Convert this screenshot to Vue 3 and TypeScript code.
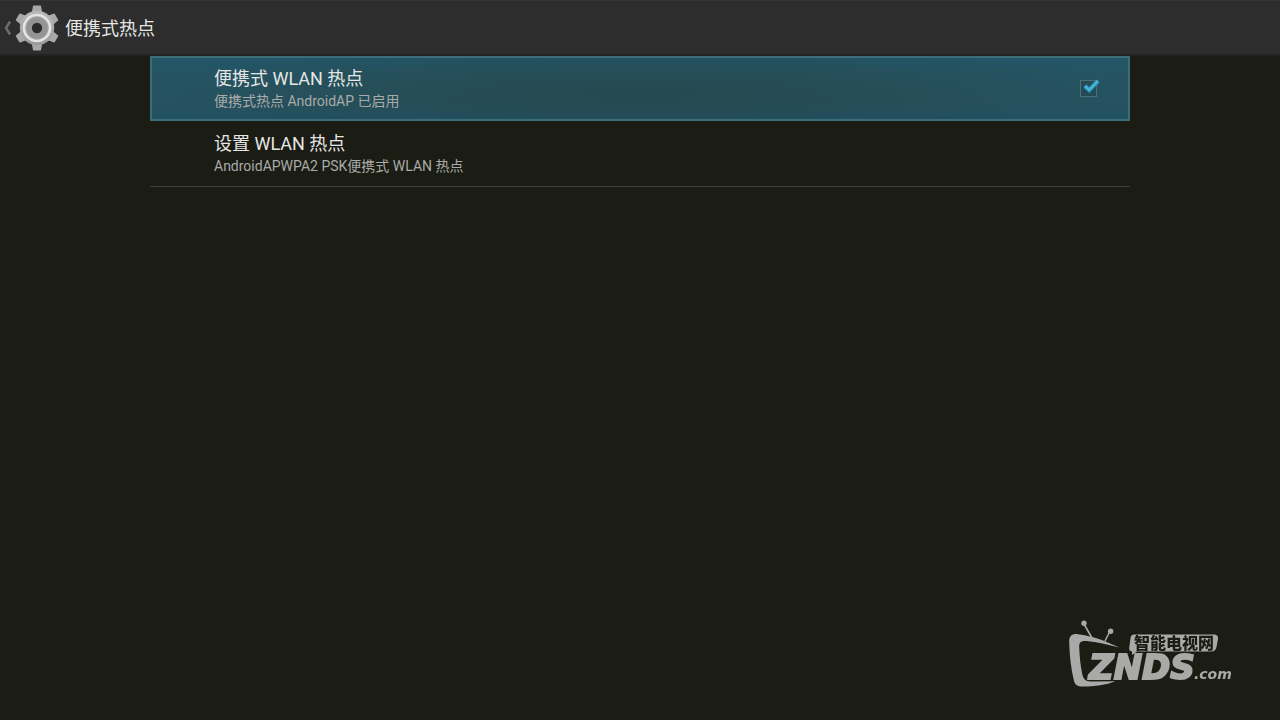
<script setup lang="ts">
import { ref } from 'vue'

const hotspotEnabled = ref<boolean>(true)
const toothAngles: number[] = [0, 60, 120, 180, 240, 300]
</script>

<template>
  <div class="screen">
    <header class="action-bar">
      <button class="up" type="button" aria-label="返回">
        <svg class="chevron" width="8" height="18" viewBox="0 0 8 18" aria-hidden="true">
          <path d="M6 2.500 L2 9 L6 15.500" fill="none" stroke="#6e6e6e" stroke-width="2.400" />
        </svg>
        <svg class="gear" width="48" height="48" viewBox="-24 -24 48 48" aria-hidden="true">
          <defs>
            <linearGradient id="metal" gradientUnits="userSpaceOnUse" x1="0" y1="-22" x2="0" y2="22">
              <stop offset="0" stop-color="#bdbdbd" />
              <stop offset="1" stop-color="#969696" />
            </linearGradient>
          </defs>
          <g fill="#a9a9a9">
            <path
              v-for="angle in toothAngles"
              :key="angle"
              d="M-5.5 -14 L-4 -22 Q-3.9 -22.4 -3.5 -22.4 H3.5 Q3.9 -22.4 4 -22 L5.5 -14 Z"
              :transform="`rotate(${angle})`"
            />
          </g>
          <circle r="17.2" fill="url(#metal)" />
          <circle r="13" fill="#a2a2a2" stroke="#e4e4e4" stroke-width="2.6" />
          <circle r="8" fill="none" stroke="#949494" stroke-width="5" />
          <circle r="5.2" fill="#2b2b2b" />
        </svg>
      </button>
      <h1 class="title">便携式热点</h1>
    </header>

    <main class="list">
      <label class="row selected">
        <span class="texts">
          <span class="name">便携式 WLAN 热点</span>
          <span class="summary">便携式热点 AndroidAP 已启用</span>
        </span>
        <span class="check">
          <input v-model="hotspotEnabled" type="checkbox" />
          <svg v-if="hotspotEnabled" class="tick" width="22" height="20" viewBox="0 0 22 20" aria-hidden="true">
            <path d="M5 9 L9.2 13 L18 3.8" fill="none" stroke="#2587a8" stroke-opacity="0.4" stroke-width="5.5" />
            <path d="M5 9 L9.2 13 L18 3.8" fill="none" stroke="#42b2db" stroke-width="3.2" />
          </svg>
        </span>
      </label>
      <button class="row plain" type="button">
        <span class="texts">
          <span class="name">设置 WLAN 热点</span>
          <span class="summary">AndroidAPWPA2 PSK便携式 WLAN 热点</span>
        </span>
      </button>
    </main>

    <svg class="watermark" width="172" height="74" viewBox="0 0 172 74" role="img" aria-label="智能电视网 ZNDS.com">
      <g fill="none" stroke="#a9a9a7" stroke-width="1.6">
        <path d="M20 8 L28 22" />
        <path d="M46 15 L41 25" />
      </g>
      <circle cx="20" cy="7.3" r="2.7" fill="#a9a9a7" />
      <circle cx="46.6" cy="15.3" r="2.7" fill="#a9a9a7" />
      <path
        d="M55.500 31.500 C45 27 33 20.500 14 18.200 C8 17.500 5 20 5.200 26 C5.500 39 7 53 10 65 C11 69 14 70.600 19 70.500 C31 70.300 42 69 51.500 65.200 L27 65.500 C21 65.500 19 62 18 57 C16.500 49 15.500 40 15.200 31 C15 26.500 17 24.500 22 25 C33 26.200 44 28.500 55.500 31.500 Z"
        fill="#a9a9a7"
      />
      <path
        d="M70 18.500 H150 Q154.500 18.500 154 23 L152.500 31 Q151.500 35.500 147 35.500 H73 L68 39 L68 35.500 Q64.500 35 65.300 31 L66.500 22 Q67 18.500 70 18.500 Z"
        fill="#a9a9a7"
      />
      <text class="mark-cn" x="70" y="33">智能电视网</text>
      <text class="mark-main" x="25" y="63">ZNDS</text>
      <text class="mark-com" x="130" y="63">.com</text>
    </svg>
  </div>
</template>

<style scoped>
.screen {
  min-height: 100vh;
  background: #1b1c14;
  font-family: Roboto, "Noto Sans CJK SC", sans-serif;
  color: #e6e6e4;
}

.action-bar {
  display: flex;
  align-items: center;
  height: 56px;
  box-sizing: border-box;
  background: #2d2d2d;
  border-top: 1px solid #353535;
  border-bottom: 2px solid #222423;
}

.up {
  display: flex;
  align-items: center;
  padding: 0 0 0 4px;
  border: 0;
  background: none;
}

.gear {
  margin-left: 1px;
}

.title {
  margin: 0 0 0 4px;
  padding-top: 2px;
  font-size: 18px;
  font-weight: 400;
  line-height: 24px;
}

.list {
  display: flex;
  flex-direction: column;
  margin: 0 150px;
}

.row {
  display: flex;
  align-items: center;
  justify-content: space-between;
  min-height: 65px;
  box-sizing: border-box;
  padding: 0 28px 0 64px;
  border: 0;
  background: none;
  color: inherit;
  font: inherit;
  text-align: left;
}

.plain {
  min-height: 66px;
  padding-top: 1px;
  border-bottom: 1px solid #41413c;
}

.selected {
  padding: 0 28px 0 62px;
  border: 2px solid #3d6d79;
  background:
    radial-gradient(ellipse 50% 90% at 50% 60%, rgba(37, 72, 78, 0.9), rgba(37, 74, 82, 0)),
    linear-gradient(#21566a, #255462 20%, #265260 80%, #205166);
}

.texts {
  display: flex;
  flex-direction: column;
}

.name {
  font-size: 18px;
  line-height: 24px;
}

.summary {
  font-size: 14px;
  line-height: 20px;
  color: #a9aba8;
}

.check {
  position: relative;
  display: flex;
  padding: 3px;
}

.check input {
  appearance: none;
  width: 17px;
  height: 17px;
  margin: 0 0 0 -2px;
  border: 1px solid #4e6f77;
  background: #234b56;
}

.tick {
  position: absolute;
  left: 1px;
  top: 0;
}

.watermark {
  position: fixed;
  right: 44px;
  bottom: 30px;
}

.mark-cn {
  font: 900 16px "Noto Sans CJK SC", sans-serif;
  fill: #1b1c14;
}

.mark-main {
  font: italic 700 34px "DejaVu Sans", sans-serif;
  fill: #a9a9a7;
  stroke: #a9a9a7;
  stroke-width: 2px;
}

.mark-com {
  font: italic 700 14px "DejaVu Sans", sans-serif;
  fill: #a9a9a7;
}
</style>

<style>
body {
  background: #1b1c14;
}
</style>
